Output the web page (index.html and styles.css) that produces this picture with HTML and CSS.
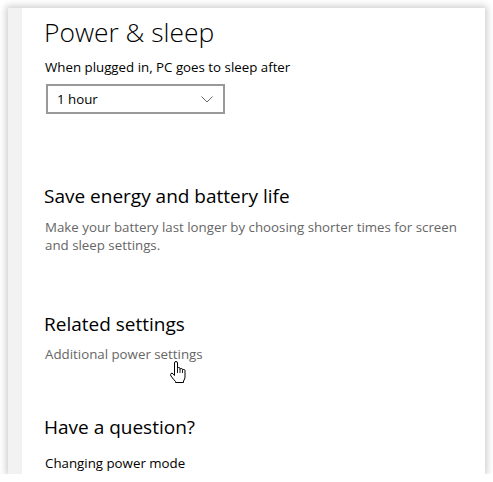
FILE: index.html
```html
<!DOCTYPE html>
<html>
<head>
<meta charset="utf-8">
<link rel="stylesheet" href="styles.css">
</head>
<body>
<div class="window">
  <div class="strip"></div>
  <div class="content">
    <h1 class="title">Power &amp; sleep</h1>
    <div class="label">When plugged in, PC goes to sleep after</div>
    <div class="select">
      <span>1 hour</span>
      <svg class="chev" width="12" height="7" viewBox="0 0 12 7"><path d="M0.5 0.5 L6 6 L11.5 0.5" fill="none" stroke="#666" stroke-width="1"/></svg>
    </div>
    <h2 class="section s1">Save energy and battery life</h2>
    <p class="desc">Make your battery last longer by choosing shorter times for screen and sleep settings.</p>
    <h2 class="section s2">Related settings</h2>
    <div class="link-wrap">
      <span class="link">Additional power settings</span>
      <svg class="cursor" width="18" height="23" viewBox="0 0 17 23">
        <path d="M5 12 L5 2 Q5 0.5 6.5 0.5 Q8 0.5 8 2 L8 7.5 Q8 6.5 9.25 6.5 Q10.5 6.5 10.5 7.5 L10.5 8.5 Q10.5 7.5 11.75 7.5 Q13 7.5 13 8.5 L13 9.5 Q13 8.5 14.25 8.5 Q15.5 8.5 15.5 9.5 L15.5 16 Q15.5 18 14 20 L14 21.5 L6 21.5 L6 20.5 Q4 18.5 1.5 15 Q0.5 13.5 1.5 12.5 Q2.5 11.8 3.5 12.8 L5 14.5 Z" fill="#fff" stroke="#000" stroke-width="1" stroke-linejoin="round"/>
        <path d="M8 7.5 L8 12 M10.5 8.5 L10.5 12 M13 9.5 L13 12" stroke="#000" stroke-width="0.9" fill="none"/>
      </svg>
    </div>
    <h2 class="section s3">Have a question?</h2>
    <div class="help">Changing power mode</div>
  </div>
</div>
</body>
</html>
```
FILE: styles.css
```css
html, body {
  margin: 0;
  padding: 0;
  background: #ffffff;
}
body {
  font-family: "Open Sans", "Noto Sans", sans-serif;
  color: #000;
}
.window {
  margin: 8px 0 0 8px;
  width: 477px;
  height: 466px;
  background: #fff;
  box-shadow: 0 0 7px 2px rgba(0,0,0,0.2);
  display: flex;
  overflow: hidden;
}
.strip {
  width: 14px;
  background: #f2f2f2;
  flex: none;
}
.content {
  padding-left: 22px;
  flex: 1;
}
.title {
  font-weight: 300;
  font-size: 26.4px;
  line-height: 36px;
  margin: 6px 0 0 0;
}
.label {
  font-size: 13.3px;
  line-height: 18px;
  margin: 8px 0 0 1px;
}
.select {
  margin: 8px 0 0 2px;
  height: 26px;
  border: 2px solid #999;
  display: flex;
  align-items: center;
  justify-content: space-between;
  padding: 0 10px 0 9px;
  box-sizing: content-box;
  width: 156px;
  font-size: 13.3px;
}
.chev { margin-top: 1px; }
.section {
  font-weight: 400;
  font-size: 19px;
  line-height: 26px;
  margin: 0;
}
.s1 { margin-top: 69px; }
.desc {
  font-size: 13.3px;
  line-height: 18px;
  color: #666;
  margin: 9px 0 0 1px;
  width: 425px;
}
.s2 { margin-top: 57px; }
.link-wrap {
  position: relative;
  margin: 8px 0 0 1px;
  font-size: 13.3px;
  line-height: 18px;
}
.link { color: #666; }
.cursor {
  position: absolute;
  left: 124px;
  top: 16px;
}
.s3 { margin-top: 51px; }
.help {
  font-size: 13.3px;
  line-height: 18px;
  margin: 14px 0 0 1px;
}
```
